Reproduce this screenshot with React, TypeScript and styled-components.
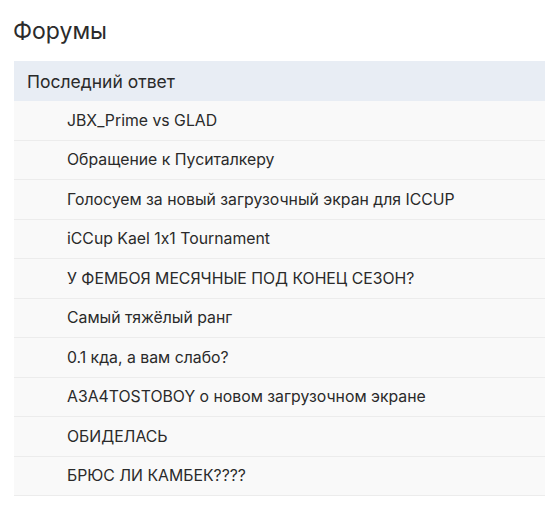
import React from 'react';
import styled, { createGlobalStyle } from 'styled-components';

const GlobalStyle = createGlobalStyle`
  body {
    margin: 0;
    background: #ffffff;
    font-family: Inter, "Noto Sans", sans-serif;
    font-feature-settings: "calt" 0;
    color: #212529;
  }
`;

const Page = styled.div`
  padding: 16px 15px 0 14px;
  width: 531px;
`;

const Title = styled.h2`
  margin: 0 0 14px -1px;
  font-size: 23px;
  font-weight: 400;
  line-height: 31px;
  color: #2b2b2b;
`;

const Table = styled.div`
  display: flex;
  flex-direction: column;
`;

const HeaderRow = styled.div`
  height: 40px;
  display: flex;
  align-items: center;
  padding-left: 13px;
  background: #e8edf4;
  font-size: 17.5px;
  color: #2a2a2a;
`;

const Row = styled.div`
  height: 39.5px;
  box-sizing: border-box;
  display: flex;
  align-items: center;
  padding-left: 53px;
  background: #f9f9f9;
  border-bottom: 1px solid #ececec;
  font-size: 15.8px;
  color: #2a2a2a;
`;

const topics = [
  'JBX_Prime vs GLAD',
  'Обращение к Пуситалкеру',
  'Голосуем за новый загрузочный экран для ICCUP',
  'iCCup Kael 1x1 Tournament',
  'У ФЕМБОЯ МЕСЯЧНЫЕ ПОД КОНЕЦ СЕЗОН?',
  'Самый тяжёлый ранг',
  '0.1 кда, а вам слабо?',
  'A3A4TOSTOBOY о новом загрузочном экране',
  'ОБИДЕЛАСЬ',
  'БРЮС ЛИ КАМБЕК????',
];

const App: React.FC = () => {
  return (
    <>
      <GlobalStyle />
      <Page>
        <Title>Форумы</Title>
        <Table>
          <HeaderRow>Последний ответ</HeaderRow>
          {topics.map((topic, index) => (
            <Row key={index}>{topic}</Row>
          ))}
        </Table>
      </Page>
    </>
  );
};

export default App;
